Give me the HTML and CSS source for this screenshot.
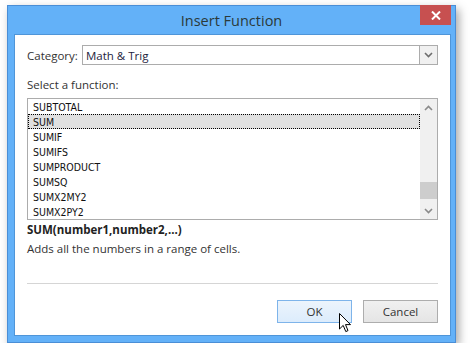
FILE: index.html
```html
<!DOCTYPE html>
<html lang="en">
<head>
    <meta charset="UTF-8">
    <title>Insert Function</title>
    <link rel="stylesheet" href="styles.css">
</head>
<body>
<div class="window">
    <div class="titlebar">
        <span class="title">Insert Function</span>
        <button class="close-btn" aria-label="Close">
            <svg width="10" height="9" viewBox="0 0 10 9"><path d="M1 0.5 L9 8.5 M9 0.5 L1 8.5" stroke="#fff" stroke-width="2"/></svg>
        </button>
    </div>

    <div class="client">
        <div class="category-row">
            <label class="label">Category:</label>
            <div class="combo">
                <span class="combo-value">Math &amp; Trig</span>
                <span class="combo-btn">
                    <svg width="9" height="6" viewBox="0 0 9 6"><path d="M1 1 L4.5 4.5 L8 1" fill="none" stroke="#6d6d6d" stroke-width="1.6"/></svg>
                </span>
            </div>
        </div>

        <div class="label select-label">Select a function:</div>

        <div class="listbox">
            <ul class="items">
                <li>SUBTOTAL</li>
                <li class="selected">SUM</li>
                <li>SUMIF</li>
                <li>SUMIFS</li>
                <li>SUMPRODUCT</li>
                <li>SUMSQ</li>
                <li>SUMX2MY2</li>
                <li>SUMX2PY2</li>
            </ul>
            <div class="scrollbar">
                <span class="arrow">
                    <svg width="9" height="6" viewBox="0 0 9 6"><path d="M1 5 L4.5 1.5 L8 5" fill="none" stroke="#8a8a8a" stroke-width="1.6"/></svg>
                </span>
                <div class="track">
                    <div class="thumb"></div>
                </div>
                <span class="arrow">
                    <svg width="9" height="6" viewBox="0 0 9 6"><path d="M1 1 L4.5 4.5 L8 1" fill="none" stroke="#8a8a8a" stroke-width="1.6"/></svg>
                </span>
            </div>
        </div>

        <div class="signature">SUM(number1,number2,...)</div>
        <div class="description">Adds all the numbers in a range of cells.</div>

        <div class="separator"></div>

        <div class="buttons">
            <button class="btn btn-ok">OK
                <svg class="cursor" width="13" height="20" viewBox="0 0 13 20">
                    <path d="M0.5 0.5 L0.5 16 L4.2 12.4 L6.8 18.6 L9 17.6 L6.5 11.6 L11.5 11.6 Z" fill="#fff" stroke="#000" stroke-width="1" stroke-linejoin="miter"/>
                </svg>
            </button>
            <button class="btn">Cancel</button>
        </div>
    </div>
</div>
</body>
</html>
```

FILE: styles.css
```css
body {
    margin: 0;
    background: #fff;
    font-family: "Open Sans", "Noto Sans", sans-serif;
}

.window {
    box-sizing: border-box;
    width: 449px;
    height: 338px;
    margin: 5px 0 0 7px;
    background: #63b1f8;
    border: 1px solid #4a8ed6;
    box-shadow: 3px 4px 9px rgba(0, 0, 0, 0.35);
    display: flex;
    flex-direction: column;
}

.titlebar {
    height: 28px;
    display: grid;
    grid-template-columns: 31px 1fr 31px;
    padding: 0 4px;
}

.title {
    grid-column: 2;
    text-align: center;
    font-size: 14.5px;
    line-height: 28px;
    color: #2b3a3a;
    padding-top: 1px;
}

.close-btn {
    grid-column: 3;
    width: 31px;
    height: 20px;
    margin-top: -1px;
    padding: 0;
    border: none;
    background: #c75050;
    display: flex;
    align-items: center;
    justify-content: center;
}

.client {
    flex: 1;
    margin: 0 4px 6px 6px;
    background: #fff;
    border: 1px solid #4f95d8;
    padding: 10px 12px 0 12px;
    display: flex;
    flex-direction: column;
}

.label {
    font-size: 11.5px;
    color: #333;
}

.category-row {
    display: flex;
    align-items: center;
}

.category-row .label {
    width: 55px;
}

.combo {
    box-sizing: border-box;
    flex: 1;
    height: 20px;
    border: 1px solid #acacac;
    display: flex;
    align-items: center;
}

.combo-value {
    flex: 1;
    padding-left: 3px;
    font-size: 11.5px;
    color: #1e2440;
}

.combo-btn {
    width: 17px;
    height: 18px;
    border-left: 1px solid #acacac;
    background: #f0f0f0;
    display: flex;
    align-items: center;
    justify-content: center;
}

.select-label {
    margin-top: 12px;
    line-height: 16px;
}

.listbox {
    box-sizing: border-box;
    height: 122px;
    margin-top: 5px;
    border: 1px solid #acacac;
    display: flex;
}

.items {
    flex: 1;
    list-style: none;
    margin: 0;
    padding: 0;
    font-family: "DejaVu Sans Condensed", "DejaVu Sans", sans-serif;
    font-stretch: condensed;
    font-size: 10.5px;
    color: #111;
}

.items li {
    box-sizing: border-box;
    height: 15px;
    line-height: 14px;
    padding-left: 4px;
    border: 1px solid transparent;
}

.items li.selected {
    background: #e0e0e0;
    border: 1px dotted #000;
}

.scrollbar {
    width: 17px;
    background: #f0f0f0;
    display: flex;
    flex-direction: column;
}

.arrow {
    height: 17px;
    display: flex;
    align-items: center;
    justify-content: center;
}

.track {
    flex: 1;
    display: flex;
    flex-direction: column;
    justify-content: flex-end;
    padding-bottom: 3px;
}

.thumb {
    height: 17px;
    background: #cdcdcd;
}

.signature {
    margin-top: 2px;
    font-size: 11.5px;
    font-weight: bold;
    color: #222;
    line-height: 16px;
}

.description {
    margin-top: 3px;
    font-size: 11.5px;
    color: #333;
    line-height: 16px;
}

.separator {
    height: 1px;
    margin-top: 26px;
    background: #d5d5d5;
}

.buttons {
    display: flex;
    justify-content: flex-end;
    gap: 11px;
    margin-top: 16px;
}

.btn {
    position: relative;
    box-sizing: border-box;
    width: 75px;
    height: 23px;
    border: 1px solid #adadad;
    background: linear-gradient(#f0f0f0, #e5e5e5);
    font-family: "Open Sans", "Noto Sans", sans-serif;
    font-size: 11.5px;
    color: #333;
    padding: 0;
}

.btn-ok {
    border-color: #7eb4ea;
    background: linear-gradient(#ecf4fc, #dcecfc);
}

.cursor {
    position: absolute;
    left: 61px;
    top: 12px;
}
```
